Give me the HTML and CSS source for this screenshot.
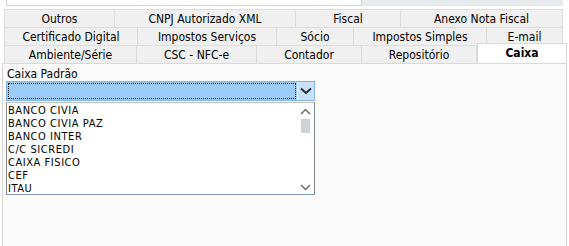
FILE: index.html
```html
<!DOCTYPE html>
<html>
<head>
<meta charset="utf-8">
<link rel="stylesheet" href="styles.css">
</head>
<body>
<div class="top">
  <div class="top-white"></div>
  <div class="top-gray"></div>
</div>
<div class="tabs">
  <div class="row">
    <div class="tab" style="width:111px">Outros</div>
    <div class="tab" style="width:181px">CNPJ Autorizado XML</div>
    <div class="tab" style="width:105px">Fiscal</div>
    <div class="tab" style="width:162px">Anexo Nota Fiscal</div>
  </div>
  <div class="row">
    <div class="tab" style="width:134px">Certificado Digital</div>
    <div class="tab" style="width:139px">Impostos Serviços</div>
    <div class="tab" style="width:77px">Sócio</div>
    <div class="tab" style="width:133px">Impostos Simples</div>
    <div class="tab" style="width:76px">E-mail</div>
  </div>
  <div class="row">
    <div class="tab" style="width:133px">Ambiente/Série</div>
    <div class="tab" style="width:120px">CSC - NFC-e</div>
    <div class="tab" style="width:105px">Contador</div>
    <div class="tab" style="width:115px">Repositório</div>
    <div class="tab active" style="width:90px">Caixa</div>
  </div>
</div>
<div class="panel">
  <div class="label">Caixa Padrão</div>
  <div class="combo">
    <div class="combo-field"><div class="focus"></div></div>
    <div class="combo-btn">
      <svg width="12" height="8" viewBox="0 0 12 8"><path d="M1 1.5 L6 6 L11 1.5" fill="none" stroke="#1e2a36" stroke-width="1.8"/></svg>
    </div>
  </div>
  <div class="list">
    <div class="items">
      <div class="item">BANCO CIVIA</div>
      <div class="item">BANCO CIVIA PAZ</div>
      <div class="item">BANCO INTER</div>
      <div class="item">C/C SICREDI</div>
      <div class="item">CAIXA FISICO</div>
      <div class="item">CEF</div>
      <div class="item">ITAU</div>
    </div>
    <div class="scroll">
      <svg class="arr" width="11" height="7" viewBox="0 0 11 7"><path d="M1 6 L5.5 1.5 L10 6" fill="none" stroke="#6b6b6b" stroke-width="1.5"/></svg>
      <div class="thumb"></div>
      <div class="spacer"></div>
      <svg class="arr" width="11" height="7" viewBox="0 0 11 7"><path d="M1 1 L5.5 5.5 L10 1" fill="none" stroke="#6b6b6b" stroke-width="1.5"/></svg>
    </div>
  </div>
</div>
</body>
</html>
```
FILE: styles.css
```css
* { box-sizing: border-box; }
html, body { margin: 0; padding: 0; background: #ffffff; }
body {
  width: 569px; height: 246px; overflow: hidden;
  font-family: "DejaVu Sans Condensed", "DejaVu Sans", sans-serif;
  font-size: 12px; color: #000;
}
.top { display: flex; height: 6px; }
.top-white {
  margin-left: 6px; width: 356px; height: 6px;
  background: #fff; border: 1px solid #d4d4d4; border-top: 0;
}
.top-gray { width: 201px; height: 6px; background: #e8ebee; }
.tabs { margin-top: 3px; margin-left: 4px; width: 563px; }
.row { display: flex; height: 18px; }
.tab {
  height: 18px; background: #f0f0f0;
  border: 1px solid #dcdcdc; border-left: 0; border-bottom: 0;
  display: flex; align-items: center; justify-content: center;
  line-height: 1;
}
.row .tab:first-child { border-left: 1px solid #dcdcdc; }
.row:first-child .tab { border-top: 1px solid #dcdcdc; }
.tab.active {
  background: #fff; font-weight: bold; height: 20px; margin-top: -2px;
  border: 1px solid #d9d9d9; border-bottom: 0; position: relative; z-index: 1;
  align-items: flex-start; padding-top: 3px;
}
.panel {
  margin-left: 2px; width: 565px; height: 184px;
  background: #fafafa; border-left: 1px solid #d6d6d6; border-right: 1px solid #d6d6d6;
  border-top: 1px solid #d9d9d9;
  padding: 3px 0 0 3px;
}
.label { height: 14px; line-height: 14px; padding-left: 1px; }
.combo {
  margin-top: 0; width: 309px; height: 20px; display: flex;
  border: 1px solid #7eb4ea; background: #fff;
}
.combo-field { flex: 1; background: #99cdf7; padding: 1px; }
.focus { width: 100%; height: 100%; border: 1px dotted #1a1a1a; }
.combo-btn {
  width: 17px; background: #c9e0f7; display: flex; align-items: center; justify-content: center;
  border-left: 1px solid #fff;
}
.list {
  width: 309px; height: 93px; margin-top: 1px; display: flex;
  background: #fff; border: 1px solid #828790; border-bottom-color: #7f9db9;
  border-top-color: #c0c0c0;
}
.items { flex: 1; padding: 1px 0 0 1px; font-size: 11px; letter-spacing: 0.55px; }
.item { height: 13px; line-height: 13px; }
.scroll { width: 17px; display: flex; flex-direction: column; align-items: center; padding: 5px 0 3px; }
.thumb { width: 9px; height: 14px; background: #cdd3d8; margin-top: 4px; }
.spacer { flex: 1; }
```
